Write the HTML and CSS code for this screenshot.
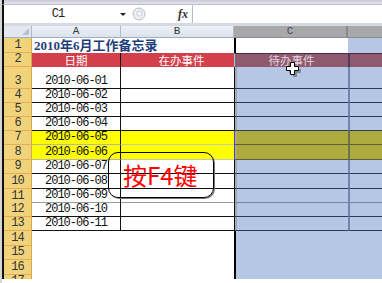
FILE: index.html
```html
<!DOCTYPE html>
<html>
<head>
<meta charset="utf-8">
<link rel="stylesheet" href="styles.css">
</head>
<body>
<div class="app">
  <div class="topstrip"></div>
  <div class="fbar">
    <div class="namebox"><span class="nb-text">C1</span><span class="nb-arrow"></span></div>
    <div class="grip">
      <svg width="14" height="14" viewBox="0 0 14 14"><circle cx="7" cy="7" r="6" fill="#eceef2" stroke="#b8bcc6"/><circle cx="7.5" cy="6.5" r="2.6" fill="#f8f9fb" stroke="#c6cad2"/></svg>
    </div>
    <div class="fx">fx</div>
    <div class="finput"></div>
  </div>
  <div class="gapbar"></div>
  <div class="sheet">
    <div class="row hdr">
      <div class="corner"></div>
      <div class="ch">A</div>
      <div class="ch">B</div>
      <div class="ch sel">C</div>
      <div class="ch sel dh"></div>
    </div>
    <div class="row h15">
      <div class="rh">1</div>
      <div class="title">2010年6月工作备忘录</div>
      <div class="c active"></div>
      <div class="d top"></div>
    </div>
    <div class="row h14 red">
      <div class="rh">2</div>
      <div class="a">日期</div>
      <div class="b">在办事件</div>
      <div class="c">待办事件</div>
      <div class="d"></div>
    </div>
    <div class="row h22 body">
      <div class="rh">3</div>
      <div class="a">2010-06-01</div>
      <div class="b"></div>
      <div class="c"></div>
      <div class="d"></div>
    </div>
    <div class="row h14 body">
      <div class="rh">4</div>
      <div class="a">2010-06-02</div>
      <div class="b"></div>
      <div class="c"></div>
      <div class="d"></div>
    </div>
    <div class="row h14 body">
      <div class="rh">5</div>
      <div class="a">2010-06-03</div>
      <div class="b"></div>
      <div class="c"></div>
      <div class="d"></div>
    </div>
    <div class="row h14 body">
      <div class="rh">6</div>
      <div class="a">2010-06-04</div>
      <div class="b"></div>
      <div class="c"></div>
      <div class="d"></div>
    </div>
    <div class="row h14 body yel">
      <div class="rh">7</div>
      <div class="a">2010-06-05</div>
      <div class="b"></div>
      <div class="c"></div>
      <div class="d"></div>
    </div>
    <div class="row h15 body yel">
      <div class="rh">8</div>
      <div class="a">2010-06-06</div>
      <div class="b"></div>
      <div class="c"></div>
      <div class="d"></div>
    </div>
    <div class="row h14 body">
      <div class="rh">9</div>
      <div class="a">2010-06-07</div>
      <div class="b"></div>
      <div class="c"></div>
      <div class="d"></div>
    </div>
    <div class="row h15 body">
      <div class="rh">10</div>
      <div class="a">2010-06-08</div>
      <div class="b"></div>
      <div class="c"></div>
      <div class="d"></div>
    </div>
    <div class="row h14 body grey">
      <div class="rh">11</div>
      <div class="a">2010-06-09</div>
      <div class="b"></div>
      <div class="c"></div>
      <div class="d"></div>
    </div>
    <div class="row h14 body">
      <div class="rh">12</div>
      <div class="a">2010-06-10</div>
      <div class="b"></div>
      <div class="c"></div>
      <div class="d"></div>
    </div>
    <div class="row h14 body">
      <div class="rh">13</div>
      <div class="a">2010-06-11</div>
      <div class="b"></div>
      <div class="c"></div>
      <div class="d"></div>
    </div>
    <div class="row h15 empty">
      <div class="rh">14</div>
      <div class="a"></div>
      <div class="b"></div>
      <div class="c"></div>
      <div class="d"></div>
    </div>
    <div class="row h14 empty">
      <div class="rh">15</div>
      <div class="a"></div>
      <div class="b"></div>
      <div class="c"></div>
      <div class="d"></div>
    </div>
    <div class="row h15 empty">
      <div class="rh">16</div>
      <div class="a"></div>
      <div class="b"></div>
      <div class="c"></div>
      <div class="d"></div>
    </div>
    <div class="row h4 empty cut">
      <div class="rh">17</div>
      <div class="a"></div>
      <div class="b"></div>
      <div class="c"></div>
      <div class="d"></div>
    </div>
  </div>
  <div class="callout">按F4键</div>
  <svg class="cursor" width="16" height="16" viewBox="0 0 16 16">
    <path d="M6.5 2.5h4v4h4v4h-4v4h-4v-4h-4v-4h4z" fill="#555" opacity="0.55" transform="translate(1.5 1.5)"/>
    <path d="M5.5 1.5h4v4h4v4h-4v4h-4v-4h-4v-4h4z" fill="#fff" stroke="#000" stroke-width="1"/>
  </svg>
</div>
</body>
</html>
```

FILE: styles.css
```css
* { box-sizing: border-box; }
html, body { margin: 0; padding: 0; background: #fff; }
.app {
  position: relative;
  width: 382px;
  height: 283px;
  overflow: hidden;
  border-left: 2px solid #d6d6d6;
  background: #fff;
}
.app > .topstrip, .app > .fbar, .app > .gapbar, .app > .sheet {
  border-left: 2px solid #111;
}
.topstrip {
  height: 5px;
  background: linear-gradient(#c9c6d6, #e4e6ee);
  border-bottom: 1px solid #b9bccb;
}
.fbar {
  height: 18px;
  display: flex;
  align-items: center;
  background: #fff;
}
.namebox {
  width: 124px;
  height: 18px;
  display: flex;
  align-items: center;
}
.nb-text {
  width: 108px;
  text-align: center;
  font-family: "Liberation Mono", monospace;
  font-size: 12px;
  letter-spacing: -1px;
  color: #222;
}
.nb-arrow {
  margin-left: 8px;
  width: 0; height: 0;
  border-left: 3px solid transparent;
  border-right: 3px solid transparent;
  border-top: 3px solid #222;
}
.grip {
  margin-left: 4px;
  width: 14px;
  height: 14px;
  display: flex;
}
.fx {
  margin-left: 32px;
  width: 12px;
  font-family: "Liberation Serif", serif;
  font-style: italic;
  font-weight: bold;
  font-size: 12px;
  color: #333;
}
.finput {
  margin-left: 2px;
  flex: 1;
  height: 18px;
  border-left: 1px solid #b8bcc8;
  background: #fff;
}
.gapbar {
  height: 3px;
  background: #d4dae4;
}
.sheet { display: flex; flex-direction: column; }
.row {
  display: grid;
  grid-template-columns: 28px 89px 113px 114px 1fr;
}
.h4 { height: 4px; }
.h14 { height: 14px; }
.h15 { height: 15px; }
.h22 { height: 22px; }
.hdr { height: 12px; }

.corner {
  position: relative;
  background: #e3e8ef;
  border-right: 1px solid #aebbcc;
  border-bottom: 1px solid #9fb0c6;
}
.corner::after {
  content: "";
  position: absolute;
  right: 2px; bottom: 2px;
  width: 0; height: 0;
  border-left: 7px solid transparent;
  border-bottom: 7px solid #b9c1cd;
}
.ch {
  background: linear-gradient(#eef2f7, #dce3ec);
  border-right: 1px solid #aebbcc;
  border-bottom: 1px solid #9fb0c6;
  font-family: "Liberation Mono", monospace;
  font-size: 11px;
  line-height: 11px;
  color: #333;
  text-align: center;
}
.ch.sel {
  background: #a8a8aa;
  border-right: 2px solid #8a8a8e;
  border-bottom: 1px solid #8c8c90;
  color: #4a4a4a;
}
.ch.dh { border-right: none; }

.rh {
  background: #f1d37c;
  border-right: 1px solid #d8a84a;
  border-bottom: 1px solid #e5ae54;
  font-family: "Liberation Mono", monospace;
  font-size: 12px;
  letter-spacing: -1px;
  color: #333;
  display: flex;
  align-items: flex-end;
  justify-content: center;
  line-height: 12px;
  padding-bottom: 1px;
}
.title {
  grid-column: span 2;
  padding-left: 2px;
  font-family: "Liberation Serif", "Noto Sans CJK SC", serif;
  font-weight: bold;
  font-size: 13px;
  line-height: 15px;
  color: #1f3f7c;
  white-space: nowrap;
}
.c.active {
  background: #fff;
  border-left: 2px solid #000;
}
.d.top { background: #b6c7e6; }

.red .a, .red .b {
  background: #d3404b;
  color: #fff;
  font-family: "Noto Sans CJK SC", sans-serif;
  font-size: 11.5px;
  line-height: 14px;
  text-align: center;
}
.red .a { border-right: 1px solid #111; }
.red .b { padding-left: 8px; }
.red .c {
  background: #8f5a70;
  border-left: 1px solid #86d4e2;
  border-top: 1px solid #4a2c40;
  color: #e6d6de;
  font-family: "Noto Sans CJK SC", sans-serif;
  font-size: 11.5px;
  line-height: 13px;
  text-align: center;
}
.red .d {
  background: #8f5a70;
  border-left: 2px solid #4c3a58;
  border-top: 1px solid #4a2c40;
}

.body .a, .body .b { background: #fff; border-bottom: 1px solid #111; }
.body .a {
  border-right: 1px solid #111;
  font-family: "Liberation Mono", monospace;
  font-size: 12px;
  letter-spacing: -1px;
  color: #111;
  display: flex;
  align-items: flex-end;
  justify-content: center;
  line-height: 12px;
  padding-bottom: 1px;
}
.body .c {
  background: #b6c7e6;
  border-left: 1px solid #111;
  box-shadow: inset 2px 0 #a4a8b0;
  border-bottom: 1px solid #2c3a62;
}
.body .d {
  background: #b6c7e6;
  border-left: 2px solid #6f86a8;
  border-bottom: 1px solid #2c3a62;
}
.yel .a, .yel .b { background: #ffff00; }
.yel .a { border-bottom-color: #b8b8a0; }
.yel .b { border-bottom-color: #c8c8b0; }
.yel .c, .yel .d { background: #acab3c; border-bottom-color: #5a5c3a; }
.yel .c { border-left-color: #3c3cff; box-shadow: inset 2px 0 #b2b060; }
.yel .d { border-left-color: #6e7050; }
.grey .a, .grey .b { border-bottom: 2px solid #9a9a9a; }
.grey .c, .grey .d { border-bottom: 2px solid #6f86a8; }

.empty .a, .empty .b { background: #fff; }
.empty .c {
  background: #b6c7e6;
  border-left: 2px solid #000;
}
.empty .d { background: #b6c7e6; }
.cut .rh { align-items: flex-start; overflow: hidden; border-bottom: none; padding-bottom: 0; }

.callout {
  position: absolute;
  left: 106px;
  top: 152px;
  width: 106px;
  height: 46px;
  border: 1.5px solid #000;
  border-radius: 10px;
  box-shadow: 1px 1px 0 #777;
  color: #ff0000;
  font-family: "Noto Sans CJK SC", sans-serif;
  font-size: 24px;
  line-height: 44px;
  padding-left: 14px;
  white-space: nowrap;
}
.cursor {
  position: absolute;
  left: 283px;
  top: 61px;
}
```
